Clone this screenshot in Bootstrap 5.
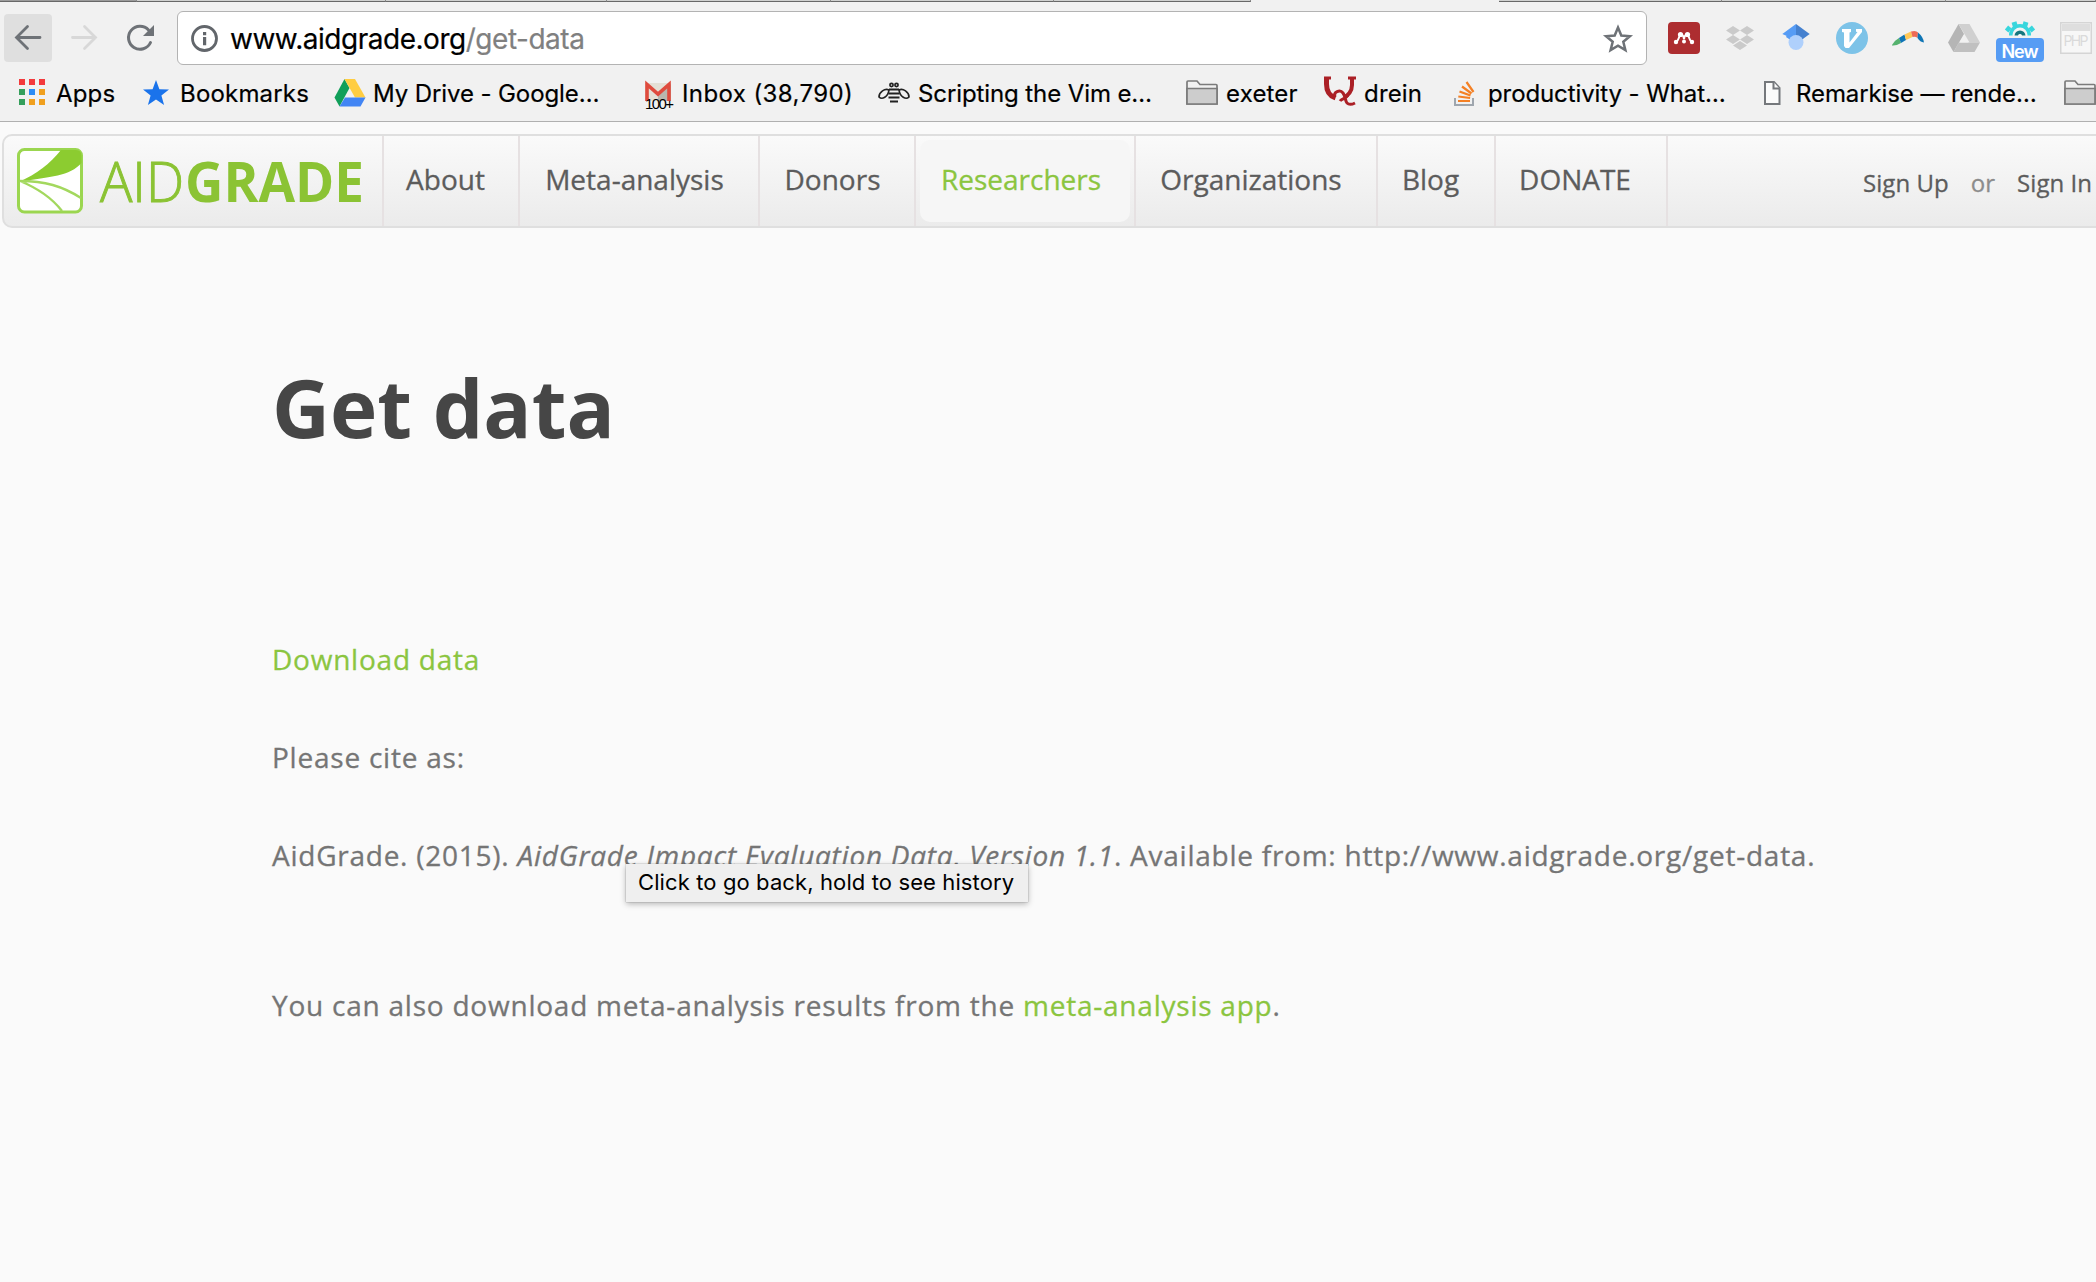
<!DOCTYPE html>
<html lang="en">
<head>
<meta charset="utf-8">
<meta name="viewport" content="width=device-width, initial-scale=1">
<title>Get data | AidGrade</title>
<link href="https://cdn.jsdelivr.net/npm/bootstrap@5.3.0/dist/css/bootstrap.min.css" rel="stylesheet">
<style>
body{background:#fafafa;font-family:"Open Sans",sans-serif;color:#757575;height:1282px;overflow:hidden}
svg{display:block;flex:none}
.chrome-ui{font-family:Inter,sans-serif;background:#f1f1f1;height:122px;border-bottom:1px solid #b0b0b0;color:#000}
.tab-strip{height:2px}
.tab-edge{background:#cfd0cf;border-bottom:1px solid #686868;border-right:1px solid #8a8a8a}
.tab-edge.first{width:137px;background:#9b9b9b}
.toolbar-row{height:74px;padding-top:9px}
.back-btn{width:48px;height:48px;border-radius:4px;background:#dfdfdf;margin:3px 0 0 4px}
.omnibox{width:1470px;height:54px;background:#fff;border:1px solid #b3b3b3;border-radius:6px;margin-left:22px;font-size:28px;letter-spacing:-.48px}
.url-text{padding-top:2px;-webkit-text-stroke:.2px}
.ext-list{gap:24px;margin:-1px 0 0 21px;height:56px}
.bookmarks-grid{display:grid;grid-template-columns:124px 191px 311px 233px 308px 138px 130px 310px 300px 40px;padding-left:19px;height:35px;font-size:24px;line-height:35px;letter-spacing:.18px;white-space:nowrap;-webkit-text-stroke:.2px}
.bookmarks-grid svg{-webkit-text-stroke:0}
.bookmarks-grid a{color:#000;text-decoration:none;display:flex}
.bookmarks-grid .tight{letter-spacing:-.1px}
.bookmarks-grid .loose{letter-spacing:.4px}
.site-nav{width:2110px;height:94px;margin:12px 0 0 2px;padding:0;border:2px solid #dfdfdf;border-radius:10px;background:linear-gradient(#fafafa,#ebebeb);flex-wrap:nowrap;justify-content:flex-start;-webkit-text-stroke:.3px}
.site-nav svg{-webkit-text-stroke:0}
.site-nav .nav-link{height:90px;padding:0 0 4px;font-size:28px;letter-spacing:0;color:#5c5c5c;display:flex;align-items:center;justify-content:center;border-left:2px solid #e6e1e2}
.site-nav .nav-link.active{color:#8bc53f;padding:3px 4px 4px}
.active-pill{background:#f6f6f6;border-radius:10px;width:210px;height:82px;display:flex;align-items:center;justify-content:center;padding:0 14px 3px 6px}
.auth-links{font-size:24px;letter-spacing:.05px;padding:3px 0 0 195px;height:90px;border-left:2px solid #e6e1e2}
.auth-links a{color:#5c5c5c;text-decoration:none}
.auth-links span{color:#8c8c8c}
.content-col{padding-left:272px;font-size:28px;line-height:48px;letter-spacing:.77px;-webkit-text-stroke:.3px}
.content-col h1{margin:129px 0 178px;font-size:80px;line-height:100px;font-weight:700;color:#464646;letter-spacing:0;-webkit-text-stroke:0}
.content-col p{margin:0 0 50px}
.content-col .citation{margin-bottom:102px;letter-spacing:.75px}
.content-col a{color:#8bc53f;text-decoration:none}
.hint{left:626px;top:864px;width:402px;height:38px;background:#efefef;color:#000;font:22px/36px Inter,sans-serif;letter-spacing:.11px;padding-left:12px;box-shadow:0 0 1px rgba(0,0,0,.45),0 2px 6px rgba(0,0,0,.28);white-space:nowrap}
</style>
<script src="https://cdn.jsdelivr.net/npm/bootstrap@5.3.0/dist/js/bootstrap.bundle.min.js"></script>
</head>
<body>
<header class="chrome-ui">
  <div class="tab-strip d-flex">
    <div class="tab-edge first"></div><div class="tab-edge" style="width:249px"></div><div class="tab-edge" style="width:221px"></div><div class="tab-edge" style="width:224px"></div><div class="tab-edge" style="width:223px"></div><div class="tab-edge" style="width:197px"></div>
    <div style="width:248px"></div>
    <div class="tab-edge" style="width:223px"></div><div class="tab-edge" style="width:224px"></div><div class="tab-edge flex-grow-1"></div>
  </div>
  <div class="toolbar-row d-flex align-items-start">
    <div class="back-btn d-flex">
      <svg width="48" height="48" viewBox="4 14 48 48" fill="none" stroke="#6e7277" stroke-width="2.8" stroke-linecap="round"><path d="M40 37.500H17M27.500 26.500 16.500 37.500l11 11"/></svg>
    </div>
    <svg width="103" height="48" viewBox="52 14 103 48" style="margin-top:3px" fill="none" stroke-width="2.800" stroke-linecap="round"><path stroke="#d8d8d8" d="M72.500 37.500h23M84.500 26.500l11 11-11 11"/><path stroke="#6e7277" stroke-width="3" d="M150.500 42.500A11.500 11.500 0 1 1 148.500 30"/><path fill="#6e7277" d="M154 25v11h-11z"/></svg>
    <div class="omnibox d-flex align-items-center">
      <svg width="52" height="52" viewBox="178 12 52 52"><circle cx="204.500" cy="38.500" r="12" fill="none" stroke="#62666b" stroke-width="2.800"/><path fill="#62666b" d="M203 32h3.200v3.200H203zM203 37h3.200v8.200H203z"/></svg>
      <div class="flex-grow-1 url-text"><span>www.aidgrade.org</span><span style="color:#808080">/get-data</span></div>
      <svg width="44" height="52" viewBox="1602 12 44 52"><path fill="none" stroke="#6e7277" stroke-width="2.500" d="m1618 27.500 3.300 8 8.600.7-6.600 5.500 2.100 8.400-7.400-4.500-7.400 4.500 2.100-8.400-6.600-5.500 8.600-.7z"/></svg>
    </div>
    <div class="ext-list d-flex align-items-center">
      <svg width="32" height="32" viewBox="0 0 32 32"><rect width="32" height="32" rx="4" fill="#ad2d30"/><g fill="#fff"><circle cx="12.500" cy="12.500" r="2.600"/><circle cx="19.500" cy="12.500" r="2.600"/><circle cx="8" cy="20" r="2.200"/><circle cx="16" cy="19.500" r="2"/><circle cx="24" cy="20" r="2.200"/></g><path fill="none" stroke="#fff" stroke-width="2" d="M8 20c3-1 2.500-6 4.500-7s3 1 3.500 4c.5-3 1.500-5 3.500-4s1.500 6 4.500 7"/></svg>
      <svg width="32" height="32" viewBox="0 0 32 32"><path fill="#cacaca" d="m9 4 7 4.500L9 13 2 8.500zM23 4l7 4.500-7 4.500-7-4.500zM9 13l7 4.500L9 22l-7-4.500zM23 13l7 4.500-7 4.500-7-4.500zM16 19l7 4.500-7 4.500-7-4.500z"/></svg>
      <svg width="32" height="32" viewBox="0 0 32 32"><path fill="#569cf5" d="M16 2v16L2.300 12z"/><path fill="#4581cf" d="M16 2l13.700 10L16 22z"/><path fill="#569cf5" d="m9 9 7 4-4 6-6-4z"/><circle cx="16" cy="20.500" r="7.500" fill="#afd0fc"/></svg>
      <svg width="32" height="32" viewBox="0 0 32 32"><circle cx="16" cy="16" r="16" fill="#7dc3e8"/><path fill="#fff" d="M6 7h9v3l-1.500.5v10L21.500 10 20 9.800V7h6v3L13 26H9.500L8 24V10.500L6 10z"/></svg>
      <svg width="32" height="32" viewBox="0 0 32 32"><path fill="#55b26e" d="M0 23q3-5 7-7l2 5q-5 3-9 2.500z"/><path fill="#0f75b5" d="M7 16l5.500-3.500L14 18l-5 3z"/><path fill="#ffc857" d="m12.500 12.500 6.500-3 1.500 5.500-6.500 3z"/><path fill="#ee6a55" d="M19 9.500q5-1.500 7 1L25.500 16q-2-2-5-1z"/><path fill="#0f75b5" d="M26 10.500q5 4 6 10-4-.5-6.500-4.500z"/></svg>
      <svg width="32" height="32" viewBox="0 0 32 32"><path fill="#b5b5b5" d="M10.500 2 0 20.500 5.500 30 16 12z"/><path fill="#d0d0d0" d="M10.500 2h11L32 20.500H21.500z"/><path fill="#c0c0c0" d="M10.800 20.500H32L26.500 30h-21z"/><path fill="#f1f1f1" d="m16 13 4.500 7.500h-9z"/></svg>
      <svg width="48" height="44" viewBox="-8 -2 48 44" style="margin:8px -8px 0"><circle cx="16" cy="13" r="11" fill="#38d6dd"/><g stroke="#38d6dd" stroke-width="5"><path d="M11.500 5 10 0M20.500 5 22 0M6 8.500 2.500 5.500M26 8.500l3.500-3"/></g><circle cx="16" cy="13" r="7.500" fill="#f4f4f4"/><circle cx="16" cy="14" r="5.500" fill="#16777e"/><circle cx="16" cy="14" r="2" fill="#fff"/><rect x="-8" y="13.500" width="48" height="28" fill="#f1f1f1"/><rect x="-8" y="16" width="48" height="24" rx="4" fill="#569cf4"/><text x="16" y="36" text-anchor="middle" font-family="Inter" font-size="18" font-weight="600" fill="#fff" textLength="37">New</text></svg>
      <svg width="32" height="32" viewBox="0 0 32 32"><rect x=".75" y=".75" width="30.500" height="30.500" fill="#f7f7f7" stroke="#d5d5d5" stroke-width="1.500"/><path fill="#dedede" d="M2 2h28v7H2z"/><text x="16" y="24" text-anchor="middle" font-family="Inter" font-size="14" fill="#dadada" textLength="25">PHP</text></svg>
    </div>
  </div>
  <nav class="bookmarks-grid">
    <a href="#"><svg width="37" height="35" viewBox="19 76 37 35"><path fill="#f33a3c" d="M19 79h6v6h-6zM29 79h6v6h-6zM39 79h6v6h-6z"/><path fill="#359f5c" d="M19 89h6v6h-6zM19 99h6v6h-6z"/><path fill="#2b8cf5" d="M29 89h6v6h-6z"/><path fill="#f0a01f" d="M39 89h6v6h-6zM29 99h6v6h-6zM39 99h6v6h-6z"/></svg>Apps</a>
    <a href="#"><svg width="37" height="35" viewBox="143 76 37 35"><path fill="#1a73eb" d="m156 80 3.400 9.200 9.600.3-7.600 5.900 2.700 9.600-8.100-5.500-8.100 5.500 2.700-9.600-7.600-5.900 9.600-.3z"/></svg>Bookmarks</a>
    <a href="#" class="tight"><svg width="39" height="35" viewBox="334 76 39 35"><path fill="#119f5a" d="m344.500 79 5 9-10 18.500-5-9z"/><path fill="#ffcd42" d="M344.500 79H355l10.500 18.500H355z"/><path fill="#4285f4" d="M345 97.500h20.500l-5 9h-21z"/></svg>My Drive - Google…</a>
    <a href="#" class="loose"><svg width="37" height="35" viewBox="645 76 37 35"><path fill="#e4e0d6" d="M645 83h26v18h-26z"/><path fill="#b9b7ae" d="m658 94 13-10v17h-13z"/><path fill="none" stroke="#df4b3e" stroke-width="3.600" d="M647 101V84.500l11 9.500 11-9.500V101"/><text x="645" y="108.500" font-family="Liberation Sans" font-size="15" letter-spacing="-1" textLength="28">100+</text></svg>Inbox (38,790)</a>
    <a href="#" class="tight"><svg width="40" height="35" viewBox="878 76 40 35"><g fill="none" stroke="#222" stroke-width="1.700"><path d="M889 90c-4-2-10 2-10 7 3 3 9 0 10-7zM899 90c4-2 10 2 10 7-3 3-9 0-10-7z"/><circle cx="891.500" cy="85" r="1.600"/><circle cx="896.500" cy="85" r="1.600"/></g><path stroke="#222" stroke-width="2.200" d="M889 89.500h10M888.500 93.500h11M888.500 97.500h11M890 101.500h8"/></svg>Scripting the Vim e…</a>
    <a href="#"><svg width="40" height="35" viewBox="1186 76 40 35"><path fill="#f1f1f1" stroke="#7b7b7b" stroke-width="1.700" d="M1187 104V82q0-1 1-1h9l3 3.500h16q1 0 1 1V104z"/><path fill="#cdcdcd" stroke="#7b7b7b" stroke-width="1.700" d="M1187 88.500h30v15.500h-30z"/></svg>exeter</a>
    <a href="#"><svg width="40" height="35" viewBox="1324 76 40 35" fill="none" stroke="#ab2026"><path stroke-width="5" d="M1326.500 77v7c0 8 3 12 9 14"/><path stroke-width="4" d="M1352 77v8c0 6-4 11-8 12"/><path stroke-width="3" d="M1324 78h7M1348 78h8M1335 97c-2-5 5-8 8-4s2 8 4 10 6 1 8 0M1340 101c2-3 6-2 8-6"/></svg>drein</a>
    <a href="#" class="tight"><svg width="34" height="35" viewBox="1454 76 34 35" fill="none"><path stroke="#9fa6ae" stroke-width="2" d="M1455 98v7h18v-7"/><path stroke="#f48024" stroke-width="2.200" d="M1458 101h12M1458.300 96.500l11.800 1.500M1459.500 91.500l11 4M1462 86.500l9.500 7M1466.500 82l7 10"/></svg>productivity - What…</a>
    <a href="#" class="tight"><svg width="32" height="35" viewBox="1764 76 32 35" fill="#fbfbfb" stroke="#75787c" stroke-width="2"><path d="M1765 82h9l5.500 6v16H1765z"/><path d="M1773.500 82v6.500h6"/></svg>Remarkise — rende…</a>
    <a href="#"><svg width="39" height="35" viewBox="1186 76 39 35"><path fill="#f1f1f1" stroke="#7b7b7b" stroke-width="1.700" d="M1187 104V82q0-1 1-1h9l3 3.500h16q1 0 1 1V104z"/><path fill="#cdcdcd" stroke="#7b7b7b" stroke-width="1.700" d="M1187 88.500h30v15.500h-30z"/></svg></a>
  </nav>
</header>

<nav class="navbar site-nav">
  <a href="#" aria-label="AidGrade"><svg width="378" height="90" viewBox="4 136 378 90">
    <rect x="18.500" y="149.500" width="63" height="62.500" rx="6" fill="#fff" stroke="#9bd650" stroke-width="3"/>
    <path fill="#8ccc30" d="M20 181.500C36 174 50 164 61 150h15q5.500 0 5.500 6v7C70 176 50 177 20 181.500z"/>
    <path fill="none" stroke="#a3d85e" stroke-width="2.400" d="M20 181c25 0 42 5 61 17M20 181c17 7 32 17 42 30"/>
    <g fill="#8bc334" font-family="Open Sans" font-size="56"><text x="100" y="202" font-weight="300" textLength="84" lengthAdjust="spacingAndGlyphs" stroke="#8bc334" stroke-width="1">AID</text><text x="185" y="202" font-weight="700" textLength="179" lengthAdjust="spacingAndGlyphs">GRADE</text></g></svg></a>
  <a class="nav-link" href="#" style="width:136px;padding-right:11px">About</a>
  <a class="nav-link" href="#" style="width:240px;padding-right:9px">Meta-analysis</a>
  <a class="nav-link" href="#" style="width:156px;padding-right:9px">Donors</a>
  <a class="nav-link active" href="#" style="width:220px"><span class="active-pill">Researchers</span></a>
  <a class="nav-link" href="#" style="width:242px;padding-right:10px">Organizations</a>
  <a class="nav-link" href="#" style="width:118px;padding-right:11px">Blog</a>
  <a class="nav-link" href="#" style="width:172px;padding-right:12px">DONATE</a>
  <div class="auth-links d-flex align-items-center"><a href="#">Sign Up</a><span style="margin:0 22px">or</span><a href="#" class="text-nowrap">Sign In</a></div>
</nav>

<main class="content-col">
  <h1>Get data</h1>
  <p><a href="#">Download data</a></p>
  <p>Please cite as:</p>
  <p class="citation">AidGrade. (2015). <em>AidGrade Impact Evaluation Data, Version 1.1</em>. Available from: http://www.aidgrade.org/get-data.</p>
  <p>You can also download meta-analysis results from the <a href="#">meta-analysis app</a>.</p>
</main>
<div class="hint position-absolute" role="tooltip">Click to go back, hold to see history</div>
</body>
</html>
